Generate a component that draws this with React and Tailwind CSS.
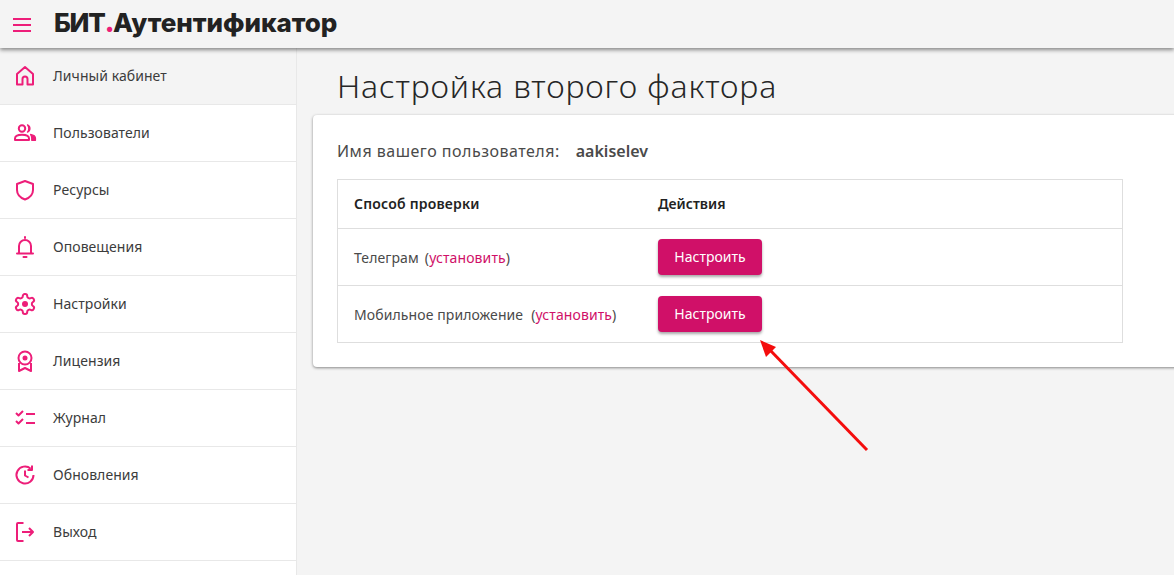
function Svg({ children, className }) {
  return (
    <svg
      viewBox="0 0 24 24"
      fill="none"
      stroke="currentColor"
      strokeWidth="2"
      strokeLinejoin="round"
      className={className}
    >
      {children}
    </svg>
  );
}

const HomeIcon = (p) => (
  <Svg {...p}>
    <path d="M4 20.500V10l8-7 8 7v10.500h-5.500V15a2.500 2.500 0 0 0-5 0v5.500z" />
  </Svg>
);

const UsersIcon = (p) => (
  <Svg {...p}>
    <circle cx="9" cy="7.500" r="3.200" />
    <path d="M2 19v-1.500c0-2.600 3.500-3.700 7-3.700s7 1.100 7 3.700V19z" />
    <path d="M14.500 3.800a4 4 0 0 1 0 7.400c1.400-2 1.400-5.400 0-7.400z" fill="currentColor" strokeWidth="1.200" />
    <path d="M17.500 13.400c2.800.5 5 1.700 5 3.900v2h-3.800v-2c0-1.500-.4-2.800-1.200-3.900z" fill="currentColor" strokeWidth="1.200" />
  </Svg>
);

const ShieldIcon = (p) => (
  <Svg {...p}>
    <path d="M12 3l8 3v6c0 4.500-3.300 7.800-8 9.500-4.700-1.700-8-5-8-9.500V6z" />
  </Svg>
);

const BellIcon = (p) => (
  <Svg {...p}>
    <path d="M6 18v-7a6 6 0 0 1 12 0v7" />
    <path d="M4 18.500h16M12 3V2M10.500 22h3" strokeLinecap="round" />
  </Svg>
);

const GearIcon = (p) => (
  <Svg {...p}>
    <path d="M12.220 2h-.44a2 2 0 0 0-2 2v.18a2 2 0 0 1-1 1.730l-.43.250a2 2 0 0 1-2 0l-.15-.08a2 2 0 0 0-2.730.730l-.22.380a2 2 0 0 0 .730 2.730l.15.100a2 2 0 0 1 1 1.720v.510a2 2 0 0 1-1 1.740l-.15.090a2 2 0 0 0-.730 2.730l.22.380a2 2 0 0 0 2.730.730l.15-.08a2 2 0 0 1 2 0l.43.250a2 2 0 0 1 1 1.730V20a2 2 0 0 0 2 2h.44a2 2 0 0 0 2-2v-.18a2 2 0 0 1 1-1.730l.43-.25a2 2 0 0 1 2 0l.15.080a2 2 0 0 0 2.730-.730l.22-.39a2 2 0 0 0-.730-2.730l-.15-.08a2 2 0 0 1-1-1.740v-.5a2 2 0 0 1 1-1.740l.15-.09a2 2 0 0 0 .730-2.730l-.22-.38a2 2 0 0 0-2.730-.730l-.15.080a2 2 0 0 1-2 0l-.43-.25a2 2 0 0 1-1-1.730V4a2 2 0 0 0-2-2z" />
    <circle cx="12" cy="12" r="3" fill="currentColor" stroke="none" />
  </Svg>
);

const LicenseIcon = (p) => (
  <Svg {...p}>
    <circle cx="12" cy="9" r="6.500" />
    <circle cx="12" cy="9" r="2.500" fill="currentColor" stroke="none" />
    <path d="M6 14v8l6-3 6 3v-8" />
  </Svg>
);

const ChecklistIcon = (p) => (
  <Svg {...p}>
    <path d="M3 7l2.500 2.500L10 5M3 15l2.500 2.500L10 13M13 8h9M13 17h9" />
  </Svg>
);

const UpdateIcon = (p) => (
  <Svg {...p}>
    <path d="M20.500 12a8.500 8.500 0 1 1-2.800-6.300" />
    <path d="M19 2.500V7h-4.500M12 7.500V12.500l3.500 2" />
  </Svg>
);

const LogoutIcon = (p) => (
  <Svg {...p}>
    <path d="M10.500 3H5a1 1 0 0 0-1 1v16a1 1 0 0 0 1 1h5.500" />
    <path d="M9 12h11M16 8l4 4-4 4" />
  </Svg>
);

const menu = [
  { label: "Личный кабинет", Icon: HomeIcon, active: true },
  { label: "Пользователи", Icon: UsersIcon },
  { label: "Ресурсы", Icon: ShieldIcon },
  { label: "Оповещения", Icon: BellIcon },
  { label: "Настройки", Icon: GearIcon },
  { label: "Лицензия", Icon: LicenseIcon },
  { label: "Журнал", Icon: ChecklistIcon },
  { label: "Обновления", Icon: UpdateIcon },
  { label: "Выход", Icon: LogoutIcon },
];

const methods = ["Телеграм", "Мобильное приложение"];

export default function App() {
  return (
    <div className="relative h-[575px] w-[1174px] overflow-hidden bg-[#f4f4f4] font-['Noto_Sans','Open_Sans',sans-serif] text-[#3c3c3c]">
      {/* HEADER */}
      <header className="relative z-10 flex h-12 items-start bg-[#f4f4f4] pl-[13px] shadow-[0_2px_4px_rgba(0,0,0,0.45)]">
        <div className="mt-[18px] flex w-[18px] flex-col gap-[4px]">
          <span className="h-[2px] bg-[#ed1e79]" />
          <span className="h-[2px] bg-[#ed1e79]" />
          <span className="h-[2px] bg-[#ed1e79]" />
        </div>
        <div className="mt-[7px] ml-[23px] font-['Inter',sans-serif] text-[26px] leading-[31px] font-extrabold tracking-[-0.03px] whitespace-nowrap text-[#222]">
          <span className="tracking-[-1.2px]">БИТ</span>
          <span className="font-black tracking-[-1.5px] text-[#ed1e79]">.</span>
          Аутентификатор
        </div>
      </header>

      <div className="flex h-[527px]">
        {/* SIDEBAR */}
        <aside className="h-full w-[297px] shrink-0 border-r border-[#e8e8e8] bg-white">
          {menu.map(({ label, Icon, active }) => (
            <div
              key={label}
              className={`flex h-[57px] items-center border-b border-[#e8e8e8] pl-[13px] text-[14px] tracking-[0.06px] ${
                active ? "bg-[#f4f4f4]" : "bg-white"
              }`}
            >
              <Icon className="h-6 w-6 shrink-0 text-[#ed1e79]" />
              <span className="ml-[16px] -translate-y-[1px]">{label}</span>
            </div>
          ))}
        </aside>

        {/* CONTENT */}
        <main className="min-w-0 flex-1 pl-4">
          <h1 className="mt-[16px] ml-[24px] text-[32px] leading-[44px] font-light tracking-[0.88px] whitespace-nowrap text-[#262626]">
            Настройка второго фактора
          </h1>
          <section className="mt-[7px] h-[252px] w-[900px] rounded-[4px] bg-white pt-[24px] pl-[24px] shadow-[0_1px_3px_rgba(0,0,0,0.45)]">
            <div className="flex h-[24px] items-center text-[16px] tracking-[0.5px] text-[#4a4a4a]">
              <span>Имя вашего пользователя:</span>
              <span className="ml-[16px] font-semibold tracking-normal">aakiselev</span>
            </div>
            <div className="mt-[16px] w-[786px] border border-[#dedede] text-[14px]">
              <div className="flex h-[49px] items-center border-b border-[#dedede] pb-[2px] font-semibold tracking-[0.2px] text-[#222]">
                <div className="w-[320px] pl-[16px]">Способ проверки</div>
                <div className="tracking-normal">Действия</div>
              </div>
              {methods.map((name, i) => (
                <div
                  key={name}
                  className={`flex items-center ${i === 0 ? "h-[57px] border-b border-[#dedede]" : "h-[56px]"}`}
                >
                  <div className="w-[320px] pl-[16px] tracking-[0.1px] text-[#4a4a4a]">
                    {name}
                    <span className={i === 0 ? "ml-[6px]" : "ml-[8px]"}>
                      (<span className="text-[#d01068]">установить</span>)
                    </span>
                  </div>
                  <button className="h-[36px] w-[104px] rounded-[4px] bg-[#d01068] pb-[2px] text-[14px] text-white shadow-[0_2px_3px_rgba(0,0,0,0.35)]">
                    Настроить
                  </button>
                </div>
              ))}
            </div>
          </section>
        </main>
      </div>

      {/* ANNOTATION ARROW */}
      <svg className="absolute top-[335px] left-[755px] h-[120px] w-[120px]" viewBox="0 0 120 120">
        <line x1="112" y1="115" x2="14" y2="14" stroke="#f40d0d" strokeWidth="3" />
        <polygon points="5,5 21,12 11,22" fill="#f40d0d" />
      </svg>
    </div>
  );
}
